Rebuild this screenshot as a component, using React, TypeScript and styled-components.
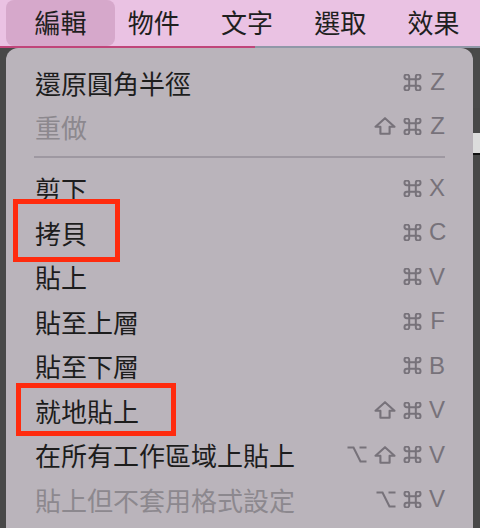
import styled, { createGlobalStyle } from "styled-components";

const GlobalStyle = createGlobalStyle`
    html, body {
        margin: 0;
        padding: 0;
        background: #4a4a4a;
    }
    #root {
        width: 480px;
        height: 528px;
    }
`;

const Page = styled.div`
    position: relative;
    display: flex;
    flex-direction: column;
    width: 480px;
    height: 528px;
    overflow: hidden;
    font-family: "Noto Sans CJK TC", "Noto Sans", sans-serif;
`;

const MenuBar = styled.nav`
    display: flex;
    align-items: stretch;
    height: 46px;
    padding-left: 14px;
    background: #eac2e3;
    border-bottom: 2px solid transparent;
    border-image: linear-gradient(to right, #c0457a 0 255px, #9098a8 255px) 1;
`;

const BarItem = styled.div<{ $active?: boolean }>`
    position: relative;
    width: 94px;
    display: flex;
    align-items: center;
    justify-content: center;
    font-size: 26px;
    color: #1f1f1f;
    padding-bottom: 3px;

    &::before {
        content: "";
        display: ${(p) => (p.$active ? "block" : "none")};
        position: absolute;
        top: 0;
        bottom: 0;
        left: -8px;
        right: -8px;
        border-radius: 8px;
        background: #d6a8cb;
    }

    span {
        position: relative;
    }
`;

const Backdrop = styled.div`
    flex: 1;
    display: flex;
    padding: 0 7px 0 6px;
    background:
        linear-gradient(#4a4a4a, #4a4a4a) right top / 7px 60px no-repeat,
        linear-gradient(#dcdcdc, #dcdcdc) right 85px / 7px 20px no-repeat,
        linear-gradient(#111, #111) right 104px / 7px 3px no-repeat,
        #484848;
`;

const Panel = styled.div`
    flex: 1;
    display: flex;
    flex-direction: column;
    padding: 12px 28px 0 28px;
    background: #bab4bb;
    border-radius: 12px 12px 0 0;
`;

const Row = styled.div<{ $h?: number }>`
    display: grid;
    grid-template-columns: 1fr auto;
    align-items: center;
    height: ${(p) => p.$h ?? 44.5}px;
    flex-shrink: 0;
`;

const Label = styled.span<{ $disabled?: boolean }>`
    padding-left: 1px;
    font-size: 26px;
    color: ${(p) => (p.$disabled ? "#8c888e" : "#1d1d1d")};
    white-space: nowrap;
`;

const Keys = styled.span`
    display: flex;
    align-items: center;
    justify-content: flex-end;
    gap: 7px;
    color: #77727a;

    svg {
        display: block;
        fill: none;
        stroke: currentColor;
        stroke-width: 2.1;
        stroke-linejoin: round;
    }
`;

const Letter = styled.span`
    font-family: "Liberation Sans", Arial, sans-serif;
    font-size: 24px;
    line-height: 1;
    width: 16px;
    text-align: right;
`;

const Separator = styled.div`
    height: 18px;
    display: flex;
    align-items: center;
    flex-shrink: 0;

    &::after {
        content: "";
        flex: 1;
        height: 2px;
        background: #9e98a1;
    }
`;

const Highlight = styled.div<{ $x: number; $y: number; $w: number; $h: number }>`
    position: absolute;
    left: ${(p) => p.$x}px;
    top: ${(p) => p.$y}px;
    width: ${(p) => p.$w}px;
    height: ${(p) => p.$h}px;
    box-sizing: border-box;
    border: 5px solid #ff2b0e;
    pointer-events: none;
`;

const Cmd = () => (
    <svg width="19" height="17" viewBox="0 0 20 18">
        <path d="M6.5 5.5V3A2.5 2.5 0 1 0 4 5.5H16A2.5 2.5 0 1 0 13.5 3V15A2.5 2.5 0 1 0 16 12.5H4A2.5 2.5 0 1 0 6.5 15Z" />
    </svg>
);

const Shift = () => (
    <svg width="22" height="18" viewBox="0 0 22 18">
        <path d="M11 1.2L20.5 9.8H15.6V16.8H6.4V9.8H1.5Z" />
    </svg>
);

const Opt = () => (
    <svg width="20" height="17" viewBox="0 0 20 17">
        <path d="M0.5 1.5H6.5L13.5 15.5H19.5M12.5 1.5H19.5" strokeLinejoin="miter" />
    </svg>
);

const glyphs: Record<string, () => JSX.Element> = { cmd: Cmd, shift: Shift, opt: Opt };

type Item = { label: string; mods: string[]; key: string; disabled?: boolean; h?: number };

const head: Item[] = [
    { label: "還原圓角半徑", mods: ["cmd"], key: "Z", h: 44 },
    { label: "重做", mods: ["shift", "cmd"], key: "Z", disabled: true, h: 44 },
];

const rest: Item[] = [
    { label: "剪下", mods: ["cmd"], key: "X", h: 44 },
    { label: "拷貝", mods: ["cmd"], key: "C" },
    { label: "貼上", mods: ["cmd"], key: "V" },
    { label: "貼至上層", mods: ["cmd"], key: "F" },
    { label: "貼至下層", mods: ["cmd"], key: "B" },
    { label: "就地貼上", mods: ["shift", "cmd"], key: "V" },
    { label: "在所有工作區域上貼上", mods: ["opt", "shift", "cmd"], key: "V" },
    { label: "貼上但不套用格式設定", mods: ["opt", "cmd"], key: "V", disabled: true },
];

function MenuRow({ item }: { item: Item }) {
    return (
        <Row $h={item.h}>
            <Label $disabled={item.disabled}>{item.label}</Label>
            <Keys>
                {item.mods.map((m) => {
                    const G = glyphs[m];
                    return <G key={m} />;
                })}
                <Letter>{item.key}</Letter>
            </Keys>
        </Row>
    );
}

export default function App() {
    return (
        <>
            <GlobalStyle />
            <Page>
                <MenuBar>
                    <BarItem $active><span>編輯</span></BarItem>
                    <BarItem><span>物件</span></BarItem>
                    <BarItem><span>文字</span></BarItem>
                    <BarItem><span>選取</span></BarItem>
                    <BarItem><span>效果</span></BarItem>
                </MenuBar>

                <Backdrop>
                    <Panel>
                        {head.map((it) => <MenuRow key={it.label} item={it} />)}
                        <Separator />
                        {rest.map((it) => <MenuRow key={it.label} item={it} />)}
                    </Panel>
                </Backdrop>

                <Highlight $x={13} $y={199} $w={107} $h={63} />
                <Highlight $x={16} $y={383} $w={160} $h={53} />
            </Page>
        </>
    );
}
